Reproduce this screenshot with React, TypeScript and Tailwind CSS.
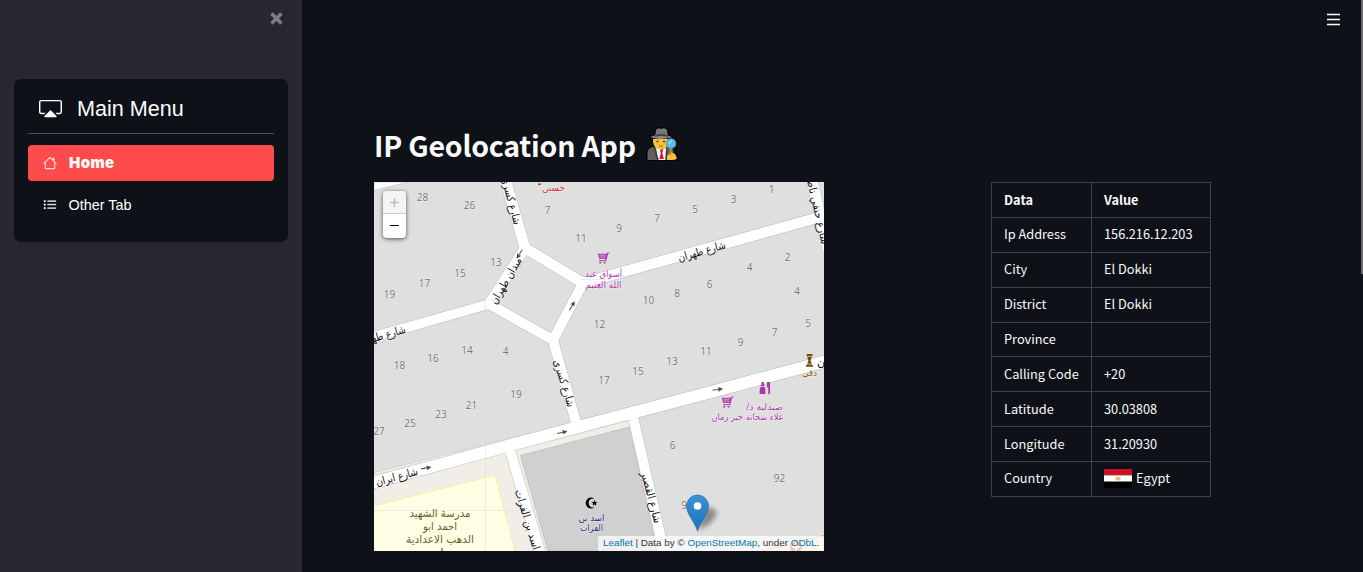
import React from "react";
import { BsCast, BsListUl } from "react-icons/bs";

const houseNumbers: [string, number, number][] = [
  ["28", 422.5, 197.5], ["26", 469.5, 205], ["7", 547.5, 210], ["11", 581, 238], ["9", 619, 228.5],
  ["7", 657, 218.5], ["5", 695, 209], ["3", 733.5, 199.5], ["1", 771.5, 189.5],
  ["13", 496, 262.5], ["15", 460, 273], ["17", 424.5, 283], ["19", 389.5, 294],
  ["2", 787.5, 257], ["4", 749.5, 267], ["6", 709.5, 284], ["8", 677, 293.5], ["10", 648.5, 300],
  ["4", 797, 291.5], ["5", 808, 323], ["7", 774.5, 332], ["9", 740.5, 342], ["11", 706, 351.5], ["13", 672, 361.5],
  ["12", 599.5, 324], ["4", 505.5, 351], ["14", 467, 350], ["16", 433, 358], ["18", 399.5, 365.5],
  ["15", 638, 371.5], ["17", 604, 380.5], ["19", 516, 394], ["21", 471.5, 405], ["23", 441, 414.5],
  ["25", 410, 423], ["27", 379, 431.5], ["6", 672.5, 445.5], ["92", 779.5, 478], ["90", 687, 505.5],
];

const roads: [string, number][] = [
  ["M505 178L525 248L583 283L820 217", 10.5],
  ["M525 248L489 304L553 340L583 283", 10],
  ["M489 304L368 338.5", 9.5],
  ["M553 340L577 426", 10],
  ["M811 176L828 250", 10.5],
  ["M368 484L509 445.5L599 421.5L717 390.5L830 360", 12],
  ["M509 447L541.5 556", 10],
  ["M632.5 415L665 556", 10],
];

const streets: [string, number, number, number, number][] = [
  ["شارع كسرى", 510.5, 201, 75, 49],
  ["ميدان طهران", 506.5, 281, -60, 52],
  ["شارع طهران", 702, 252, -16, 49],
  ["شارع طهران", 382, 336.5, -16, 49],
  ["شارع حنفي ناصر", 816.5, 209, 77, 72],
  ["شارع كسرى", 563.5, 383.5, 73, 49],
  ["شارع ايران", 397, 477.5, -15, 43],
  ["شارع اسد بن الفرات", 530.5, 532, 73, 88],
  ["شارع القصير", 650.5, 497.5, 75, 53],
];

const places: [string, number, number, number, string, number][] = [
  ["أسواق عبد", 603.5, 277, 37, "#ac39ac", 9],
  ["الله العتيم", 603.5, 288, 36, "#ac39ac", 9],
  ["صيدلية د/", 764.5, 409.5, 37, "#ac39ac", 9],
  ["علاء شحاتة خير زمان", 747.5, 420, 72, "#ac39ac", 9],
  ["حسين", 553.5, 191, 23, "#d42f35", 9.5],
  ["دقي", 809.5, 376, 15, "#8b6217", 9.5],
  ["مدرسة الشهيد", 440, 517, 61, "#66661a", 11],
  ["احمد ابو", 440, 530, 34, "#66661a", 11],
  ["الدهب الاعدادية", 440, 543, 68, "#66661a", 11],
  ["بنات", 440, 556, 22, "#66661a", 11],
  ["اسد بن", 591.5, 521, 26, "#292878", 9],
  ["الفرات", 591.5, 531, 23, "#292878", 9],
];

const arrows: [number, number, number][] = [
  [519.5, 254, 122], [572, 306, -60], [562, 432.5, -12], [426, 468, -10], [717.5, 389.5, -8],
];

const cart = "M0 .5h2l.6 1.2h9.2l-1.6 5.4H3.9l.3 1.2h6.2v1H3.2L1.4 1.5H0zM4 10h1.8v1.5H4zM8.4 10h1.8v1.5H8.4z";

function StreetMap() {
  return (
    <svg viewBox="374 182 450 369" className="block h-[369px] w-[450px]">
      <defs>
        <linearGradient id="pin" x1="0" y1="0" x2="0" y2="1">
          <stop offset="0" stopColor="#3b93d0" />
          <stop offset="1" stopColor="#1a70c0" />
        </linearGradient>
        <filter id="soft" x="-50%" y="-50%" width="200%" height="200%">
          <feGaussianBlur stdDeviation="2.8" />
        </filter>
      </defs>
      <rect x="374" y="182" width="450" height="369" fill="#dfdfdf" />
      <path d="M374 472.5L571 423L509 447L374 484z" fill="#f1eee8" stroke="#c9c5c0" strokeWidth=".6" />
      <path d="M374 484L509 447L541 551H374z" fill="#f1eee8" />
      <path d="M509 447L632 415L664 551H541z" fill="#f1eee8" />
      <path d="M599 415.500L634 406.500V412z" fill="#f1eee8" stroke="#c9c5c0" strokeWidth=".6" />
      <path d="M520.5 455.5L629.5 427L657 551H548z" fill="#d0d0d0" stroke="#bcbcbc" strokeWidth=".8" />
      <path d="M372 506.5L495 475L515.5 553H372z" fill="#ffffe5" stroke="#f6f1a0" strokeWidth="1" />
      <path d="M374 182H408L374 190.5z" fill="#fff" stroke="#c4c4c4" strokeWidth=".7" />
      <path d="M750 554L824 535.5V551z" fill="#f8e5c8" stroke="#d5a45c" strokeWidth="1" />
      {roads.map(([d, w]) => (
        <path key={"c" + d} d={d} fill="none" stroke="#c3c3c3" strokeWidth={w + 1.2} strokeLinejoin="round" />
      ))}
      {roads.map(([d, w]) => (
        <path key={d} d={d} fill="none" stroke="#fff" strokeWidth={w} strokeLinejoin="round" />
      ))}
      <path d="M485.5 300V551M374 510.5H824M580 279.5H610" stroke="#d6d6d6" strokeOpacity=".45" fill="none" />
      {arrows.map(([x, y, r]) => (
        <g key={x} transform={`translate(${x} ${y}) rotate(${r})`}>
          <path d="M-5 0H2" stroke="#555" strokeWidth="1.1" />
          <path d="M5.5 0L.5-2.5L1.5 0L.5 2.5z" fill="#444" />
        </g>
      ))}
      <g fontFamily="'Open Sans', 'Noto Sans', sans-serif" fontSize="10" fill="#777" textAnchor="middle" stroke="#ebebeb" strokeWidth="1" paintOrder="stroke">
        {houseNumbers.map(([n, x, y]) => (
          <text key={`${x}-${y}`} x={x} y={y + 3.5}>{n}</text>
        ))}
      </g>
      <g fontFamily="'DejaVu Sans', sans-serif" fontSize="11.2" fill="#111" textAnchor="middle" direction="rtl" stroke="#fff" strokeWidth="1" paintOrder="stroke">
        {streets.map(([t, x, y, r, w]) => (
          <text key={`${x}-${y}`} transform={`translate(${x} ${y}) rotate(${r})`} y="3" textLength={w} lengthAdjust="spacingAndGlyphs">{t}</text>
        ))}
        <text x="821" y="366">ن</text>
      </g>
      <g fontFamily="'DejaVu Sans', sans-serif" textAnchor="middle" direction="rtl">
        {places.map(([t, x, y, w, c, s]) => (
          <text key={`${x}-${y}`} x={x} y={y} fill={c} fontSize={s} textLength={w} lengthAdjust="spacingAndGlyphs" stroke="#fff" strokeOpacity=".5" strokeWidth="1.1" paintOrder="stroke">{t}</text>
        ))}
      </g>
      <path d="M538 183.5h3v1.5h-3z" fill="#d42f35" />
      <g fill="#ac39ac">
        {[[597, 252], [721, 396]].map(([x, y]) => (
          <g key={x} transform={`translate(${x + 12.5} ${y}) scale(-1 1)`}>
            <path d={cart} />
            <path d="M3.5 3.3H11M3.8 5H10.6M5.5 2V7M8 2V7" stroke="#e9d4e9" strokeWidth=".4" />
          </g>
        ))}
        <path d="M761.5 382h2.4v2.3l.5 1v.9h-3.5v-.9l.6-1zM760.5 387h4.2l.7 2.500v4.500h-5.800v-4.500zM767 382h3v12h-1.700v-6.500H767z" />
      </g>
      <path d="M806.500 354h6v1.700h-1v2.600L810.500 360.500L811.500 363V365h1.500v1.700h-7V365h1.500v-2L808.500 360.500L807.500 358.300V355.700h-1z" fill="#734a08" />
      <path d="M808 356.500h3M808 364h3" stroke="#d7b16c" strokeWidth="1" />
      <path d="M594.5 498.600A5.500 5.500 0 1 0 594.500 507.400A4.600 4.600 0 1 1 594.500 498.600z" fill="#000" />
      <path d="M594.500 500l.8 2.100 2.300.1-1.800 1.400.6 2.200-1.900-1.200-1.900 1.200.6-2.200-1.800-1.400 2.300-.1z" fill="#000" />
      <circle cx="796" cy="547" r="6" fill="#d84545" />
      <path d="M796 543.500v7M792.500 547h7" stroke="#fff" strokeWidth="2" />
      <path d="M698 530L702 511C709 504 720 509 715 517C711 525 704 527 698 530z" fill="#000" opacity=".38" filter="url(#soft)" />
      <path d="M697.500 531C694.500 521.500 686.500 514 686.500 506A11 11 0 0 1 708.500 506C708.500 514 700.500 521.500 697.500 531z" fill="url(#pin)" stroke="#2b73aa" strokeWidth=".7" />
      <circle cx="697.500" cy="506" r="4.100" fill="#fff" stroke="#2a78b5" strokeWidth=".6" />
    </svg>
  );
}

function Detective() {
  return (
    <svg viewBox="0 0 34 36" className="ml-[9px] h-[36px] w-[34px] shrink-0">
      <path d="M9 10L10 3L15 1L20 1L24 3L25 9L31 13L32 19L29 24L33 29V35H1V24L8 19L6 14L4 12V9z" fill="#050505" />
      <path d="M2.500 34V25Q4 21 12 20H22Q28 21 28.500 25V34z" fill="#606060" />
      <path d="M11 21L17 24L22 21L21 34H13z" fill="#f4f4f4" />
      <path d="M8 13H24V16Q23 23 16 23Q9 23 8 16z" fill="#fbc13a" />
      <path d="M10 11L11 4Q13 1 16 3Q20 1 22 4L23 11z" fill="#777" />
      <path d="M5 11Q16 6 27 11Q16 15 5 11z" fill="#8b8b8b" />
      <path d="M10.500 9Q16 7 22.500 9L23 11Q16 9 10 11z" fill="#414141" />
      <path d="M11.500 15.500h2M18 15.500h2" stroke="#4b3728" strokeWidth="1.500" />
      <path d="M14 20h4" stroke="#b7622c" strokeWidth="1" />
      <path d="M15 24h3l-.7 3 1.500 6h-4.500l1.500-6z" fill="#d51728" />
      <path d="M9 21L13 34M22 21L21 34" stroke="#393939" strokeWidth="1.500" />
      <path d="M22 30L26 26L30 28L32 32Q31 34 28 34H22z" fill="#fbc13a" />
      <path d="M26 22L25 29" stroke="#c48727" strokeWidth="2" />
      <circle cx="26" cy="17.500" r="4.700" fill="#40c9f3" stroke="#81939b" strokeWidth="1.200" />
      <path d="M23.500 18L27 14.500" stroke="#9ae8ff" strokeWidth="1.300" />
    </svg>
  );
}

function Flag() {
  return (
    <svg viewBox="0 0 28 19" className="mr-[4px] h-[19px] w-[28px]">
      <path d="M0 0h28v6.300H0z" fill="#ce1126" />
      <path d="M0 6.300h28v6.400H0z" fill="#fff" />
      <path d="M0 12.700h28V19H0z" fill="#000" />
      <path d="M11.500 7.500L13.500 8.300L14 7.300L14.500 8.300L16.500 7.500V10.500L15.500 11.500H12.500L11.500 10.500z" fill="#dfc57b" />
    </svg>
  );
}

const rows: [string, React.ReactNode][] = [
  ["Ip Address", "156.216.12.203"],
  ["City", "El Dokki"],
  ["District", "El Dokki"],
  ["Province", ""],
  ["Calling Code", "+20"],
  ["Latitude", "30.03808"],
  ["Longitude", "31.20930"],
  ["Country", <span className="flex items-center"><Flag />Egypt</span>],
];

export default function App() {
  return (
    <div className="flex h-[572px] w-full overflow-hidden bg-[#0e1117] font-['Noto_Sans_CJK_SC','Noto_Sans',sans-serif] text-[#fafafa]">
      <aside className="flex w-[302px] shrink-0 flex-col bg-[#262730] px-[14px]">
        <div className="flex h-[79px] justify-end pr-[5px] pt-[12px]">
          <svg viewBox="0 0 13 13" className="h-[13px] w-[13px]">
            <path d="M1.500 1.500L11.500 11.500M11.500 1.500L1.500 11.500" stroke="#7d7e83" strokeWidth="3.600" />
          </svg>
        </div>
        <nav className="h-[163px] rounded-[7px] bg-[#0e1117] px-[14px] font-['Liberation_Sans',sans-serif] text-white">
          <div className="flex h-[55px] items-center border-b border-[#4d4f54] pl-[11px] pt-[4px]">
            <BsCast className="h-[23px] w-[23px]" />
            <span className="ml-[15px] pt-[1px] text-[21.600px] leading-none">Main Menu</span>
          </div>
          <div className="mt-[11px] flex h-[36px] items-center rounded-[4px] bg-[#ff4b4b] pl-[15px]">
            <svg viewBox="0 0 16 16" className="h-[14px] w-[14px]" fill="currentColor">
              <path fillRule="evenodd" d="M2 13.500V7h1v6.500a.5.5 0 0 0 .5.5h9a.5.5 0 0 0 .5-.5V7h1v6.500a1.500 1.500 0 0 1-1.500 1.500h-9A1.500 1.500 0 0 1 2 13.500zm11-11V6l-2-2V2.500a.5.5 0 0 1 .5-.5h1a.5.5 0 0 1 .5.5z" />
              <path fillRule="evenodd" d="M7.293 1.500a1 1 0 0 1 1.414 0l6.647 6.646a.5.5 0 0 1-.708.708L8 2.207 1.354 8.854a.5.5 0 1 1-.708-.708L7.293 1.500z" />
            </svg>
            <span className="ml-[12px] pb-[1px] font-['Inter',sans-serif] text-[15px] font-black leading-none tracking-[0.4px]">Home</span>
          </div>
          <div className="mt-[6px] flex h-[36px] items-center pl-[15px]">
            <BsListUl className="h-[14px] w-[14px] stroke-[0.5]" />
            <span className="ml-[11.500px] text-[14.400px] leading-none">Other Tab</span>
          </div>
        </nav>
      </aside>
      <main className="flex min-w-0 grow flex-col pl-[72px]">
        <header className="flex h-[124px] justify-end pr-[21px] pt-[13px]">
          <svg viewBox="0 0 13 13" className="h-[13px] w-[13px]">
            <path d="M0 1.500H13M0 6.500H13M0 11.500H13" stroke="#fafafa" strokeWidth="1.600" />
          </svg>
        </header>
        <h1 className="flex h-[58px] items-start pt-[2px] text-[28.500px] font-bold leading-[38px] tracking-[-0.220px] whitespace-nowrap">
          IP Geolocation App
          <Detective />
        </h1>
        <div className="flex items-start">
          <section className="relative h-[369px] w-[450px] shrink-0 overflow-hidden bg-[#dfdfdf] font-['Liberation_Sans',sans-serif]">
            <StreetMap />
            <div className="absolute left-[9px] top-[9px] w-[23px] overflow-hidden rounded-[4px] bg-white text-center shadow-[0_1px_4px_rgba(0,0,0,0.65)]">
              <div className="flex h-[23px] items-center justify-center border-b border-[#ccc] bg-[#f4f4f4] pt-[1px]">
                <svg viewBox="0 0 9 9" className="h-[9px] w-[9px]"><path d="M4.500 0V9M0 4.500H9" stroke="#bbb" strokeWidth="1.400" /></svg>
              </div>
              <div className="flex h-[24px] items-center justify-center pb-[1px]">
                <svg viewBox="0 0 9 9" className="h-[9px] w-[9px]"><path d="M0 4.500H9" stroke="#000" strokeWidth="1.200" /></svg>
              </div>
            </div>
            <div className="absolute bottom-0 right-0 h-[15px] w-[226px] bg-white/70 pl-[5px] text-[9.900px] leading-[14px] whitespace-nowrap text-[#333]">
              <span className="text-[#0078a8]">Leaflet</span> | Data by © <span className="text-[#0078a8]">OpenStreetMap</span>, under <span className="text-[#0078a8]">ODbL</span>.
            </div>
          </section>
          <table className="ml-[167px] w-[219px] table-fixed border-collapse text-[12.750px] leading-[18px]">
            <colgroup><col className="w-[100px]" /><col className="w-[119px]" /></colgroup>
            <tbody>
              <tr className="h-[35px] font-bold">
                <td className="border border-[#3e4146] px-[12px] py-0">Data</td>
                <td className="border border-[#3e4146] px-[12px] py-0">Value</td>
              </tr>
              {rows.map(([k, v]) => (
                <tr key={k} className="h-[34.860px]">
                  <td className="border border-[#3e4146] px-[12px] pt-0 pb-[1px] whitespace-nowrap">{k}</td>
                  <td className="border border-[#3e4146] px-[12px] pt-0 pb-[1px] whitespace-nowrap">{v}</td>
                </tr>
              ))}
            </tbody>
          </table>
        </div>
      </main>
      <div className="h-[274px] w-[2px] shrink-0 bg-[#6b6c70]" />
    </div>
  );
}
